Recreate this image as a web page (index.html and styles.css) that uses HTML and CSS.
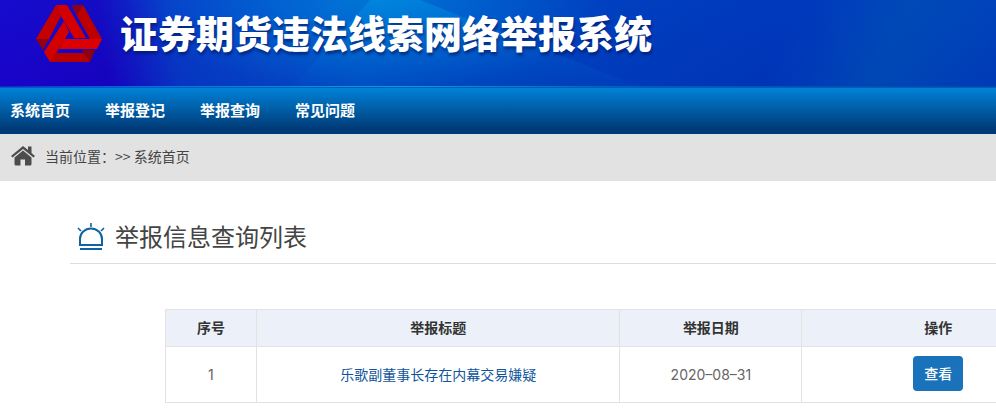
FILE: index.html
```html
<!DOCTYPE html>
<html lang="zh-CN">
<head>
    <meta charset="UTF-8">
    <meta name="viewport" content="width=device-width, initial-scale=1.0">
    <title>证券期货违法线索网络举报系统</title>
    <link rel="stylesheet" href="styles.css">
</head>
<body>
    <header class="header">
        <svg class="header-bg" viewBox="0 0 996 86" preserveAspectRatio="none" aria-hidden="true">
            <defs>
                <linearGradient id="beam" x1="0" y1="0" x2="0" y2="1">
                    <stop offset="0" stop-color="#00a0e8" stop-opacity=".4"/>
                    <stop offset="1" stop-color="#0070d0" stop-opacity=".04"/>
                </linearGradient>
                <linearGradient id="edge">
                    <stop offset="0" stop-color="#1a20e0"/>
                    <stop offset=".15" stop-color="#0070f0"/>
                    <stop offset=".4" stop-color="#00a0e0"/>
                    <stop offset=".65" stop-color="#0058c0"/>
                    <stop offset="1" stop-color="#0048b4"/>
                </linearGradient>
            </defs>
            <polygon points="370,0 420,0 610,74 640,86 293,86" fill="url(#beam)"/>
            <rect x="0" y="85" width="996" height="1" fill="url(#edge)"/>
        </svg>
        <svg class="logo" viewBox="0 0 68 58" aria-hidden="true">
            <polygon points="21,0 26,11 14,34 1,34" fill="#c40000"/>
            <polygon points="21,0 32,0 51,33 39,33 26,11" fill="#d40000"/>
            <polygon points="37,0 48,0 67,34 55,34 42,11" fill="#bc0000"/>
            <polygon points="37,0 48,0 42,11" fill="#900010"/>
            <polygon points="1,34 14,34 8,45" fill="#900010"/>
            <polygon points="29,16 34,27 20,50 15,57 9,47" fill="#d40000"/>
            <polygon points="29,34 67,34 62,44 24,44" fill="#dc0000"/>
            <polygon points="21,48 49,48 55,57 15,57" fill="#b80000"/>
            <polygon points="47,45 60,45 55,57" fill="#900010"/>
        </svg>
        <h1>证券期货违法线索网络举报系统</h1>
    </header>

    <nav class="nav">
        <a href="#">系统首页</a>
        <a href="#">举报登记</a>
        <a href="#">举报查询</a>
        <a href="#">常见问题</a>
    </nav>

    <div class="crumb">
        <svg class="home-icon" viewBox="0 0 24 20" aria-hidden="true">
            <path d="M12 0 L0 10 L1.500 11.500 L12 3 L22.500 11.500 L24 10 L20.500 7 V0.500 H17 V4.100 Z" fill="#4c4c4c"/>
            <path d="M12 4.500 L3.500 11.500 V18 Q3.500 19.500 5 19.500 H9.500 V13.500 H14 V19.500 H19 Q20.500 19.500 20.500 18 V11.500 Z" fill="#4c4c4c"/>
        </svg>
        <span>当前位置：&gt;&gt; <a href="#">系统首页</a></span>
    </div>

    <main class="content">
        <div class="title">
            <svg class="alarm-icon" viewBox="0 0 28 28" fill="none" stroke="#0f63a0" stroke-width="2" aria-hidden="true">
                <path d="M3 22 V16 A11 10.500 0 0 1 25 16 V22 Z"/>
                <path d="M3 26 H25"/>
                <path d="M14 0 V4 M1 5 L4 8 M27 5 L24 8" stroke-width="1.600"/>
            </svg>
            <h2>举报信息查询列表</h2>
        </div>

        <table class="list">
            <thead>
                <tr>
                    <th class="col-no">序号</th>
                    <th class="col-title">举报标题</th>
                    <th class="col-date">举报日期</th>
                    <th class="col-op">操作</th>
                </tr>
            </thead>
            <tbody>
                <tr>
                    <td class="num">1</td>
                    <td><a href="#">乐歌副董事长存在内幕交易嫌疑</a></td>
                    <td class="num">2020–08–31</td>
                    <td><button type="button" class="btn">查看</button></td>
                </tr>
            </tbody>
        </table>
    </main>
</body>
</html>
```

FILE: styles.css
```css
* {
  box-sizing: border-box;
  margin: 0;
  padding: 0;
}

body {
  font-family: "Noto Sans CJK SC", sans-serif;
  font-size: 14px;
  line-height: 20px;
  color: #444;
  background: #fff;
  overflow-x: hidden;
}

a {
  color: inherit;
  text-decoration: none;
}

.header {
  position: relative;
  display: flex;
  align-items: flex-start;
  gap: 17px;
  height: 88px;
  padding: 5px 0 0 35px;
  border-bottom: 1px solid #0060b0;
  background:
    radial-gradient(ellipse 240px 90px at 37% 0, rgba(0, 140, 225, 0.6), rgba(0, 120, 220, 0)),
    linear-gradient(to bottom, rgba(0, 80, 220, 0.15), rgba(0, 30, 170, 0.1)),
    linear-gradient(80deg, #1c00cc 0, #1800c0 11%, #0838c4 18%, #0050c4 36%, #0040bc 56%, #0036b8 76%);
}

.header::before {
  content: "";
  position: absolute;
  inset: 0;
  background: linear-gradient(115deg, rgba(0, 84, 180, 0) 78%, rgba(0, 84, 180, 0.6) 88%, rgba(0, 84, 180, 0.2) 100%);
}

.header-bg {
  position: absolute;
  inset: 0;
  width: 100%;
  height: 100%;
}

.logo {
  position: relative;
  width: 68px;
  height: 58px;
}

.header h1 {
  position: relative;
  font-size: 38px;
  font-weight: 900;
  line-height: 54px;
  color: #fff;
  white-space: nowrap;
  text-shadow: 1px 3px 3px rgba(0, 20, 90, 0.6);
}

.nav {
  display: flex;
  gap: 35px;
  height: 46px;
  padding-left: 10px;
  background: linear-gradient(to bottom, #0082d8, #003a76 90%);
}

.nav a {
  font-size: 15px;
  font-weight: bold;
  line-height: 44px;
  color: #fff;
}

.crumb {
  display: flex;
  align-items: center;
  gap: 10px;
  height: 47px;
  padding: 0 0 3px 11px;
  background: #e2e2e2;
}

.home-icon {
  width: 24px;
  height: 20px;
}

.content {
  min-width: 1100px;
  margin: 0 70px;
  padding-top: 30px;
}

.title {
  display: flex;
  align-items: center;
  gap: 10px;
  height: 53px;
  padding-left: 7px;
  border-bottom: 1px solid #ddd;
}

.title h2 {
  padding-bottom: 2px;
  font-size: 24px;
  font-weight: normal;
  line-height: 28px;
}

.alarm-icon {
  width: 28px;
  height: 28px;
}

.list {
  width: 910px;
  margin: 45px auto 0;
  border-collapse: collapse;
  table-layout: fixed;
}

.list th,
.list td {
  padding-bottom: 2px;
  border: 1px solid #e2e2e2;
  text-align: center;
}

.list th {
  height: 37px;
  color: #333;
  background: #ecf1f9;
}

.list td {
  height: 56px;
  color: #666;
}

.list td.num {
  padding-bottom: 0;
  font-family: Inter, sans-serif;
}

.list td a {
  color: #10559a;
}

.col-no {
  width: 10%;
}

.col-title {
  width: 40%;
}

.col-date {
  width: 20%;
}

.col-op {
  width: 30%;
}

.btn {
  height: 35px;
  padding: 0 11px 2px;
  border: none;
  border-radius: 4px;
  font: inherit;
  font-weight: 500;
  color: #fff;
  background: #1a73ba;
  cursor: pointer;
}
```
